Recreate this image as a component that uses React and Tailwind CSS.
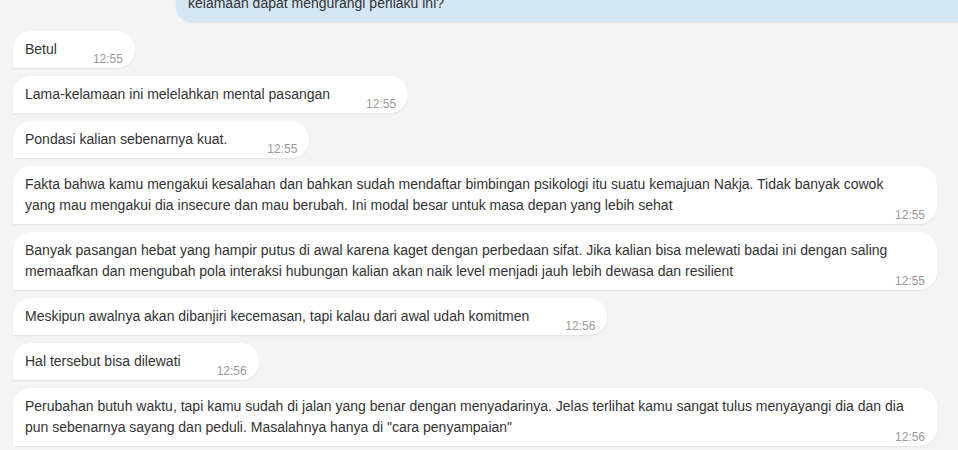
import React from "react";

const msgs = [
  { lines: ["Betul"], t: "12:55" },
  { lines: ["Lama-kelamaan ini melelahkan mental pasangan"], t: "12:55" },
  { lines: ["Pondasi kalian sebenarnya kuat."], t: "12:55", wide: true },
  {
    lines: [
      "Fakta bahwa kamu mengakui kesalahan dan bahkan sudah mendaftar bimbingan psikologi itu suatu kemajuan Nakja. Tidak banyak cowok",
      "yang mau mengakui dia insecure dan mau berubah. Ini modal besar untuk masa depan yang lebih sehat",
    ],
    t: "12:55",
  },
  {
    lines: [
      "Banyak pasangan hebat yang hampir putus di awal karena kaget dengan perbedaan sifat. Jika kalian bisa melewati badai ini dengan saling",
      "memaafkan dan mengubah pola interaksi hubungan kalian akan naik level menjadi jauh lebih dewasa dan resilient",
    ],
    t: "12:55",
  },
  { lines: ["Meskipun awalnya akan dibanjiri kecemasan, tapi kalau dari awal udah komitmen"], t: "12:56" },
  { lines: ["Hal tersebut bisa dilewati"], t: "12:56" },
  {
    lines: [
      "Perubahan butuh waktu, tapi kamu sudah di jalan yang benar dengan menyadarinya. Jelas terlihat kamu sangat tulus menyayangi dia dan dia",
      'pun sebenarnya sayang dan peduli. Masalahnya hanya di "cara penyampaian"',
    ],
    t: "12:56",
  },
];

function Bubble({ lines, t, wide }) {
  const multi = lines.length > 1;
  return (
    <div
      className={
        "bg-white text-[#333333] rounded-[18px] rounded-bl-none px-3 py-2 shadow-[0_1px_2px_rgba(0,0,0,0.07)] " +
        (multi ? "w-[924px]" : "self-start max-w-[924px]")
      }
    >
      <div className="whitespace-nowrap">
        {lines.map((l, i) => (
          <React.Fragment key={i}>
            {i > 0 && <br />}
            {l}
          </React.Fragment>
        ))}
        <span
          className={
            "float-right relative top-[10px] text-[12px] leading-[21px] text-[#9a9a9a] " +
            (wide ? "ml-[40px]" : "ml-[36px]")
          }
        >
          {t}
        </span>
      </div>
    </div>
  );
}

export default function App() {
  return (
    <div className="w-[958px] h-[450px] overflow-hidden bg-[#f4f4f4] font-['Liberation_Sans',Arial,sans-serif] text-[14px] leading-[21px]">
      <div className="ml-[176px] mt-[-15px] bg-[#d3e6f3] rounded-bl-[16px] pl-3 py-2 text-[#333333] shadow-[0_1px_2px_rgba(0,0,0,0.06)]">
        kelamaan dapat mengurangi perilaku ini?
      </div>
      <div className="flex flex-col gap-2 pl-[13px] mt-[9px]">
        {msgs.map((m, i) => (
          <Bubble key={i} {...m} />
        ))}
      </div>
    </div>
  );
}
